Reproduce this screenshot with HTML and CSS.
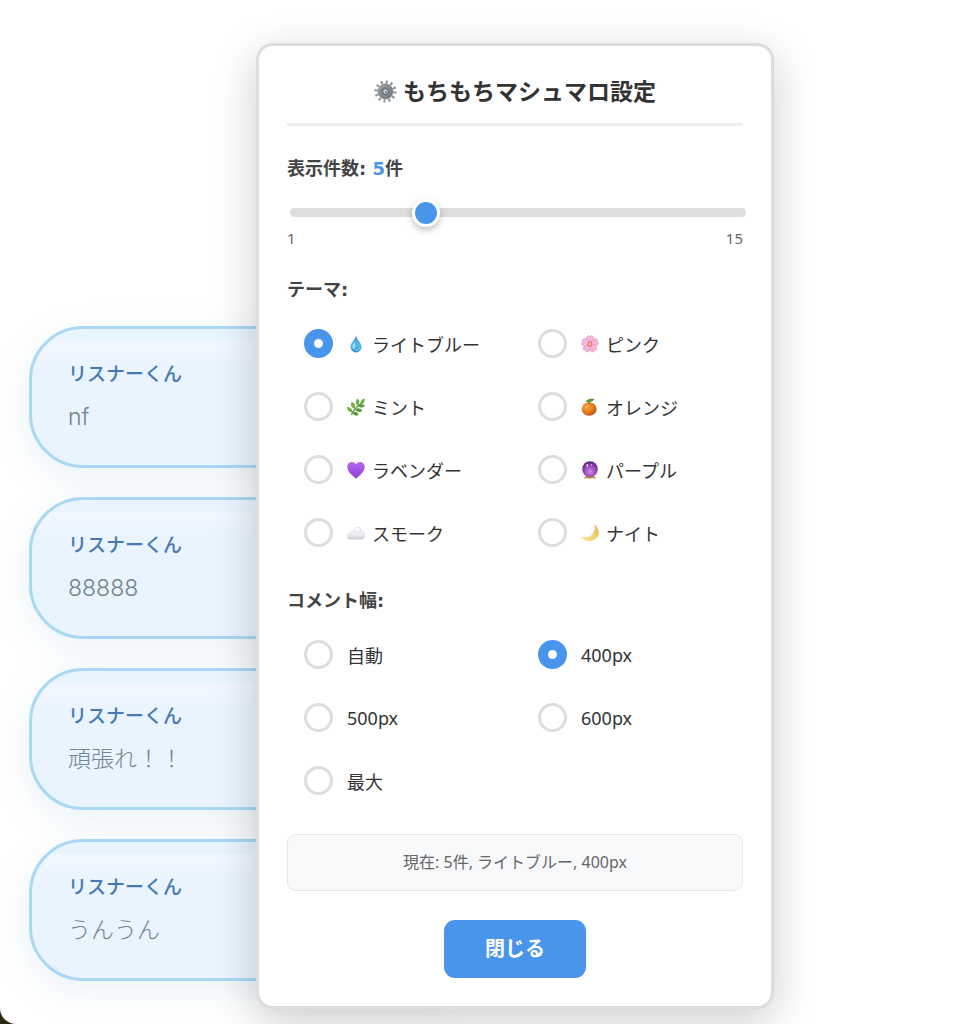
FILE: index.html
```html
<!DOCTYPE html>
<html lang="ja">
<head>
  <meta charset="UTF-8">
  <meta name="viewport" content="width=device-width, initial-scale=1.0">
  <title>もちもちマシュマロ設定</title>
  <link rel="stylesheet" href="styles.css">
</head>
<body>
  <main class="stage">
    <ul class="comments">
      <li class="comment">
        <p class="comment-name">リスナーくん</p>
        <p class="comment-text">nf</p>
      </li>
      <li class="comment">
        <p class="comment-name">リスナーくん</p>
        <p class="comment-text">88888</p>
      </li>
      <li class="comment">
        <p class="comment-name">リスナーくん</p>
        <p class="comment-text">頑張れ！！</p>
      </li>
      <li class="comment">
        <p class="comment-name">リスナーくん</p>
        <p class="comment-text">うんうん</p>
      </li>
    </ul>

    <div class="overlay">
      <form class="modal">
        <h1 class="modal-title">
          <svg class="gear" viewBox="0 0 24 24" aria-hidden="true">
            <defs>
              <linearGradient id="steel" x1="0" y1="0" x2="1" y2="1">
                <stop offset="0" stop-color="#a3a9ae"/>
                <stop offset="1" stop-color="#62696f"/>
              </linearGradient>
            </defs>
            <circle cx="12" cy="12" r="9.8" fill="none" stroke="#8d949a" stroke-width="3.600" stroke-dasharray="2 3.131"/>
            <circle cx="12" cy="12" r="7.800" fill="url(#steel)" stroke="#858c92" stroke-width="1"/>
            <circle cx="12" cy="12" r="5" fill="#747c84" stroke="#8f979d" stroke-width="1"/>
            <circle cx="12" cy="12" r="2.800" fill="#e3e6e8" stroke="#555c63" stroke-width="1"/>
            <circle cx="12.3" cy="12.2" r="1.100" fill="#596067"/>
          </svg>
          もちもちマシュマロ設定
        </h1>

        <div class="group">
          <label class="group-label" for="count">表示件数: <span class="count-value">5</span>件</label>
          <input class="slider" type="range" id="count" min="1" max="15" value="5">
          <div class="slider-ends">
            <span>1</span>
            <span>15</span>
          </div>
        </div>

        <fieldset class="group">
          <legend class="group-label">テーマ:</legend>
          <div class="options">
            <label class="option">
              <input type="radio" name="theme" value="lightblue" checked>
              <svg class="icon" viewBox="0 0 20 20" aria-hidden="true">
                <defs>
                  <linearGradient id="drop" x1="0" y1="0" x2="0" y2="1">
                    <stop offset="0" stop-color="#3d94cf"/>
                    <stop offset=".6" stop-color="#5cb9ee"/>
                    <stop offset="1" stop-color="#2e90d6"/>
                  </linearGradient>
                </defs>
                <path d="M10 .5C9 5 3.800 9 3.800 13.200a6.200 6.200 0 0 0 12.400 0C16.200 9 11 5 10 .5z" fill="url(#drop)"/>
                <path d="M9 7C7.500 9.500 6 11.500 6.200 13.800c.3 1.800 1.300 2.300 2 1.800C9.300 14 8.300 11 9 7z" fill="#a8def9"/>
                <path d="M10 17c2 0 3.500-1 4-3" fill="none" stroke="#a9e2fb"/>
              </svg>
              ライトブルー
            </label>
            <label class="option">
              <input type="radio" name="theme" value="pink">
              <svg class="icon" viewBox="0 0 20 20" aria-hidden="true">
                <g fill="#f5b3d5" stroke="#e08fbc" stroke-width=".5">
                  <path id="petal" d="M10 10C5.500 7 4.800 2.500 7.800.5l2.200 1 2.200-1C15.200 2.500 14.500 7 10 10z"/>
                  <use href="#petal" transform="rotate(72 10 10)"/>
                  <use href="#petal" transform="rotate(144 10 10)"/>
                  <use href="#petal" transform="rotate(216 10 10)"/>
                  <use href="#petal" transform="rotate(288 10 10)"/>
                </g>
                <circle cx="10" cy="10" r="2.700" fill="#d0608a"/>
                <circle cx="10" cy="10" r="1.700" fill="#f5d35c"/>
              </svg>
              ピンク
            </label>
            <label class="option">
              <input type="radio" name="theme" value="mint">
              <svg class="icon" viewBox="0 0 20 20" aria-hidden="true">
                <path d="M5 19c1-5 5-9 12-14" fill="none" stroke="#5b8f35" stroke-width="1.200"/>
                <g fill="#72b147">
                  <path d="M12 8.500c-2.800-2-2.800-5.500-.5-8 2.700 2 2.800 5.500.5 8zM8.500 12c-3.800-1-5-4.500-3.500-7.500 3.800 1 5 4.500 3.500 7.500zM6 16C2.500 16 0 13.500 0 10c4 0 6 2.500 6 6zM15 7c-.5-3.500 1.500-6 4.700-6.500C20 4.500 18.500 7 15 7z"/>
                </g>
                <g fill="#5a9b3c">
                  <path d="M12 9c2-2.800 5.500-2.800 8-.5-2.300 2.800-5.500 2.800-8 .5zM9 12.500c3-2.200 6.500-1 8.200 2-3.200 2-6.700 1-8.200-2zM6 16c3-1.500 5.800-.3 7 2.800C10 20.500 7.200 19 6 16z"/>
                </g>
              </svg>
              ミント
            </label>
            <label class="option">
              <input type="radio" name="theme" value="orange">
              <svg class="icon" viewBox="0 0 20 20" aria-hidden="true">
                <defs>
                  <radialGradient id="peel" cx=".35" cy=".35" r=".7">
                    <stop offset="0" stop-color="#f7a94a"/>
                    <stop offset=".6" stop-color="#e37b20"/>
                    <stop offset="1" stop-color="#b95312"/>
                  </radialGradient>
                </defs>
                <ellipse cx="9" cy="12.200" rx="8.300" ry="7.600" fill="url(#peel)"/>
                <path d="M8.800 6.500C9 4 9.500 3 10.500 2" fill="none" stroke="#6b6a2b" stroke-width="1.300"/>
                <path d="M5 3.800C8.500.5 12 0 15 1.300 12.500 4.500 9 5.700 5 3.800z" fill="#5f9a3b"/>
              </svg>
              オレンジ
            </label>
            <label class="option">
              <input type="radio" name="theme" value="lavender">
              <svg class="icon" viewBox="0 0 20 20" aria-hidden="true">
                <defs>
                  <linearGradient id="heart" x1="0" y1="0" x2="0" y2="1">
                    <stop offset="0" stop-color="#b768f0"/>
                    <stop offset="1" stop-color="#8c3cd6"/>
                  </linearGradient>
                </defs>
                <path d="M10 19.500C5 15.500.3 11 .3 6.300.3.800 7.500-.8 10 4 12.500-.8 19.700.8 19.700 6.300 19.700 11 15 15.500 10 19.500z" fill="url(#heart)"/>
              </svg>
              ラベンダー
            </label>
            <label class="option">
              <input type="radio" name="theme" value="purple">
              <svg class="icon" viewBox="0 0 20 20" aria-hidden="true">
                <defs>
                  <radialGradient id="ball" cx=".5" cy=".65" r=".6">
                    <stop offset="0" stop-color="#d48be8"/>
                    <stop offset=".6" stop-color="#9547b5"/>
                    <stop offset="1" stop-color="#5f2483"/>
                  </radialGradient>
                </defs>
                <path d="M3.500 19.800c0-2.300 2-3.800 6.500-3.800s6.500 1.500 6.500 3.800l-3.500-.8-3 .8-3-.8z" fill="#bd8c35"/>
                <circle cx="10" cy="9" r="8.700" fill="url(#ball)"/>
                <ellipse cx="7" cy="5" rx="1" ry="1.700" fill="#f0d3fa"/>
                <circle cx="11.500" cy="4.200" r=".8" fill="#e6bdf3"/>
              </svg>
              パープル
            </label>
            <label class="option">
              <input type="radio" name="theme" value="smoke">
              <svg class="icon" viewBox="0 0 20 20" aria-hidden="true">
                <defs>
                  <linearGradient id="cloud" x1="0" y1="0" x2="0" y2="1">
                    <stop offset="0" stop-color="#fafbfc"/>
                    <stop offset=".6" stop-color="#eceef1"/>
                    <stop offset="1" stop-color="#c9ced5"/>
                  </linearGradient>
                </defs>
                <path d="M4 17C1.500 17 .3 15.500.3 13.500c0-2 1.500-3.500 3.700-3.500.2-1.900 1.500-2.900 3.200-2.600C8 4.800 9.500 3.500 11.500 3.500c2.600 0 4.500 1.900 4.500 4.800 2.400.2 3.700 2 3.700 4.300 0 2.700-1.700 4.400-4.200 4.400z" fill="url(#cloud)" stroke="#cdd1d6" stroke-width=".6"/>
                <path d="M7 8c1.500.3 2.200 1.200 2.400 2.200M12 10.500c.8-1.500 2-2.200 3.800-2" fill="none" stroke="#d3d7dc" stroke-width=".8"/>
              </svg>
              スモーク
            </label>
            <label class="option">
              <input type="radio" name="theme" value="night">
              <svg class="icon" viewBox="0 0 20 20" aria-hidden="true">
                <defs>
                  <linearGradient id="moon" x1="1" y1="0" x2="0" y2="1">
                    <stop offset="0" stop-color="#e4bf47"/>
                    <stop offset="1" stop-color="#fae698"/>
                  </linearGradient>
                </defs>
                <path d="M14.500.5C20.500 4 21.500 12 16.500 16.500 11.500 21 3.500 19.500.2 14c6 2.200 12 0 14.200-5 1.200-3 1.200-6 .1-8.500z" fill="url(#moon)"/>
              </svg>
              ナイト
            </label>
          </div>
        </fieldset>

        <fieldset class="group">
          <legend class="group-label">コメント幅:</legend>
          <div class="options">
            <label class="option"><input type="radio" name="width" value="auto">自動</label>
            <label class="option"><input type="radio" name="width" value="400" checked>400px</label>
            <label class="option"><input type="radio" name="width" value="500">500px</label>
            <label class="option"><input type="radio" name="width" value="600">600px</label>
            <label class="option"><input type="radio" name="width" value="max">最大</label>
          </div>
        </fieldset>

        <p class="status">現在: 5件, ライトブルー, 400px</p>
        <button class="close-button" type="button">閉じる</button>
      </form>
    </div>
  </main>
</body>
</html>
```
FILE: styles.css
```css
* {
  box-sizing: border-box;
}

body {
  margin: 0;
  background: #2b2a10;
  color: #333;
  font-family: "Noto Sans", "Noto Sans CJK JP", sans-serif;
  font-size: 18px;
}

.stage {
  position: relative;
  min-height: 100vh;
  display: flex;
  flex-direction: column;
  justify-content: flex-end;
  background: #fff;
  border-bottom-left-radius: 16px;
  overflow: hidden;
}

/* comments */
.comments {
  list-style: none;
  margin: 0;
  padding: 0 29px 43px;
  display: flex;
  flex-direction: column;
  gap: 29px;
}

.comment {
  width: 100%;
  max-width: 456px;
  height: 142px;
  padding: 29px 36px;
  border: 3px solid #a9d8f4;
  border-radius: 54px;
  background: linear-gradient(to bottom, #e8f4fe 12px, #f1f7ff 12px, #e9f4fe 42px);
  box-shadow: 0 10px 36px rgba(100, 160, 190, 0.14);
  font-family: "Inter", "Noto Sans CJK JP", sans-serif;
}

.comment-name {
  margin: 0;
  color: #4679b2;
  font-size: 19px;
  font-weight: 500;
  line-height: 34px;
}

.comment-text {
  margin: 8px 0 0;
  color: #708490;
  font-size: 23px;
  font-weight: 300;
  line-height: 34px;
}

/* settings modal */
.overlay {
  position: absolute;
  inset: 0;
  display: flex;
  justify-content: center;
  align-items: flex-start;
  padding: 43px 0 0 64px;
}

.modal {
  width: 100%;
  max-width: 518px;
  padding: 28px;
  border: 3px solid #ddd;
  border-radius: 17px;
  background: #fff;
  box-shadow: 0 12px 44px rgba(0, 0, 0, 0.2);
}

.modal-title {
  display: flex;
  justify-content: center;
  align-items: center;
  gap: 6px;
  margin: 0 0 28px;
  padding-bottom: 14px;
  border-bottom: 3px solid #eee;
  font-size: 23px;
  font-weight: 700;
  line-height: 35px;
}

.gear {
  width: 23px;
  height: 23px;
}

.group {
  margin: 0 0 28px;
  padding: 0;
  border: none;
}

.group-label {
  display: block;
  padding: 0;
  color: #444;
  font-family: "DejaVu Sans", "Noto Sans CJK JP", sans-serif;
  font-weight: 700;
  line-height: 29px;
}

.count-value {
  color: #4a95ec;
}

.slider {
  display: block;
  appearance: none;
  width: 100%;
  height: 9px;
  margin: 25px 3px 12px;
  border-radius: 5px;
  background: #ddd;
}

.slider::-webkit-slider-thumb {
  appearance: none;
  width: 28px;
  height: 28px;
  border: 3px solid #fff;
  border-radius: 50%;
  background: #4a95ec;
  box-shadow: 0 3px 7px rgba(0, 0, 0, 0.25);
}

.slider-ends {
  display: flex;
  justify-content: space-between;
  color: #666;
  font-size: 15px;
  line-height: 18px;
}

.options {
  display: grid;
  grid-template-columns: 1fr 1fr;
  gap: 12px;
  margin-top: 14px;
}

.option {
  display: flex;
  align-items: center;
  height: 51px;
  padding-left: 17px;
  cursor: pointer;
}

.option input {
  appearance: none;
  width: 29px;
  height: 29px;
  margin: 0 14px 0 0;
  border: 3px solid #ddd;
  border-radius: 50%;
  background: #fff;
}

.option input:checked {
  border: 10px solid #4a95ec;
}

.icon {
  width: 18px;
  height: 18px;
  margin-right: 7px;
}

.status {
  margin: 0 0 29px;
  padding: 17px;
  border: 1px solid #e6e9ec;
  border-radius: 9px;
  background: #f8f9fb;
  color: #666;
  font-size: 16px;
  line-height: 21px;
  text-align: center;
}

.close-button {
  display: block;
  margin: 0 auto;
  padding: 14px 41px;
  border: none;
  border-radius: 11px;
  background: #4a95ec;
  color: #fff;
  font-family: inherit;
  font-size: 20px;
  font-weight: 700;
  line-height: 30px;
  cursor: pointer;
}
```
